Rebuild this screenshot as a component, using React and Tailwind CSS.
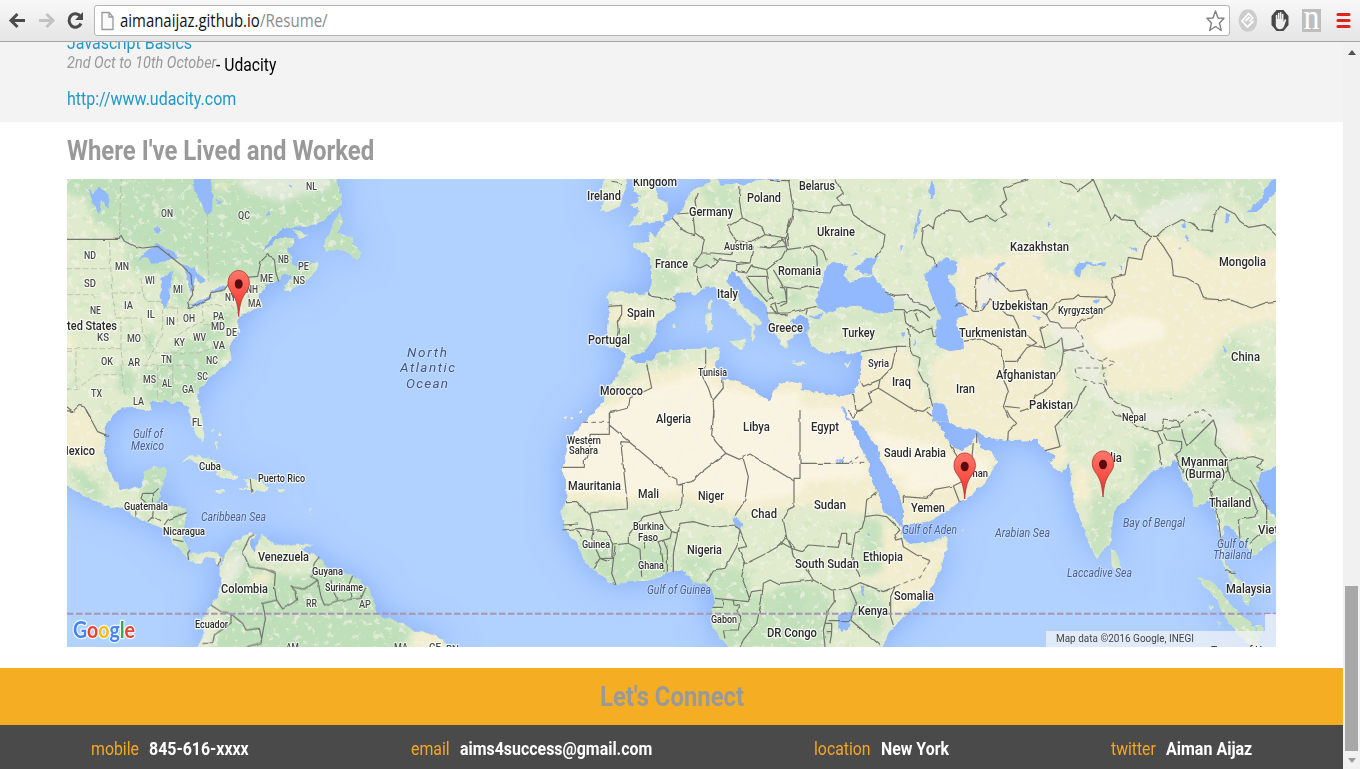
import React, { useLayoutEffect, useRef } from "react";

/* Text condensed horizontally to the width of its box. */
function Fit({ className = "", children }) {
  const box = useRef(null);
  const text = useRef(null);
  useLayoutEffect(() => {
    const fit = () => {
      const natural = text.current.offsetWidth;
      if (natural) text.current.style.transform = `scaleX(${box.current.clientWidth / natural})`;
    };
    fit();
    document.fonts?.ready.then(fit);
  }, []);
  return (
    <span ref={box} className={`block shrink-0 whitespace-nowrap ${className}`}>
      <span ref={text} className="inline-block origin-left">{children}</span>
    </span>
  );
}

/* The map is drawn in sheets; each sheet has its own origin and a 3:1 scale. */
const SHEETS = {
  A: "translate(66 178) scale(.33333)",
  D: "translate(66 410) scale(.33333)",
  E: "translate(540 178) scale(.33333)",
  F: "translate(780 178) scale(.33333)",
  G: "translate(1020 178) scale(.33333)",
  H: "translate(540 410) scale(.33333)",
  I: "translate(780 410) scale(.33333)",
  J: "translate(1020 410) scale(.33333)",
};

const LAND = [
  ["A", "M-30-30H800L815 20 828 50 828 80 800 100 775 128 740 140 720 147 690 145 650 152 625 172 600 205 580 232 600 212 622 192 650 180 680 180 685 195 662 215 675 235 678 255 700 272 725 268 755 248 757 262 745 285 715 310 680 335 660 340 655 325 680 300 672 288 650 290 637 310 600 322 585 340 580 362 590 385 565 396 540 405 520 415 515 440 520 460 505 480 490 505 497 545 475 565 440 590 405 625 393 650 400 685 410 725H372L370 690 350 672 320 675 300 665 280 672 250 675 257 692 235 700 215 690 180 688 150 700 130 725H-30Z"],
  ["A", "M825 103L805 128 790 170 775 200 780 222 815 213 840 222 862 230 875 253 882 220 860 195 860 180 832 172 815 165 828 130Z"],
  ["A", "M680 155L700 158 725 172 700 180Z"],
  ["D", "M-30-10H165L125 15 118 60 115 110 120 155 140 200 165 238 200 235 225 230 238 185 260 172 300 175 295 205 285 235 278 265 272 290 310 288 345 290 362 310 355 345 350 385 370 428 400 435 430 422 455 430 466 445 458 468 440 445 420 440 405 463 365 450 345 420 320 405 315 385 290 355 250 340 200 315 170 288 135 295 90 275 60 260 0 225-30 210Z"],
  ["D", "M370-10L375 30 390 65 405 93 415 75 410 40 398-10Z"],
  ["D", "M345 158L365 140 400 136 440 152 470 175 515 200 500 207 465 205 450 187 410 168 370 150Z"],
  ["D", "M447 240L470 238 478 245 460 252Z"],
  ["D", "M535 207H575L612 235 600 242 570 240 560 250 552 240 515 240 548 233Z"],
  ["D", "M635 238H658L655 247H637ZM448 95L456 100 453 120ZM458 65L468 70 462 80ZM432 62L446 60 440 66ZM733 296L738 300 734 304ZM737 312L740 318 735 318Z"],
  ["D", "M460 470L475 440 490 410 520 385 550 365 572 372 556 400 565 425 575 400 590 370 600 385 620 400 660 408 715 402 740 405 705 418 740 430 765 450 795 490 860 495 905 530 925 580 935 612 960 625 1010 640 1050 665 1100 672 1130 690 1150 725H400L400 690 415 670 405 645 430 590 455 560 467 520Z"],
  ["E", "M195-10H255L262 20 245 60 240 85 200 103 180 95 200 60 185 35Z"],
  ["E", "M275-10L285 20 280 40 300 50 292 72 272 82 300 95 285 115 262 150 300 138 375 130 368 115 385 100 382 75 355 60 350 40 330-10Z"],
  ["E", "M505-20L512 10 475 30 445 50 430 95 395 120 360 155 345 180 325 162 328 192 280 195 278 210 320 225 335 265 330 345 300 348 215 340 198 358 208 390 205 450 198 505 235 508 262 540 310 520 345 480 350 440 408 385 400 355 430 340 465 350 500 325 530 330 560 375 600 410 635 450 632 490 645 475 640 440 668 437 655 420 610 385 590 350 562 310 575 280 600 300 640 350 680 380 685 420 705 460 725 500 740 515 735 490 755 485 770 460 745 430 780 405V20L690 5 650 5 620 22 590 15 540 25 530-20Z"],
  ["E", "M570 490L615 485 608 515 580 502ZM495 410L515 403 517 455 500 462ZM505 370L515 363 512 395 503 392ZM395 445L405 438 409 450ZM756 552L782 555V562Z"],
  ["E", "M150 725L190 670 195 640 230 600 245 565 258 535 290 555 320 555 360 522 430 513 480 512 535 508 545 522 525 560 548 605 600 610 650 645 690 672 697 635 740 610 785 618V725Z"],
  ["F", "M0-10H790V730H-3V615L60 636 120 645 150 650 190 655 222 645 240 600 245 518 215 530 180 518 130 528 95 505 82 470 85 425 60 408 30 428 42 450 60 465 20 480 25 510 0 500Z"],
  ["F", "M188 560L215 550 200 570ZM35 550L82 556 60 563Z"],
  ["G", "M-5-10H800V730H-5Z"],
  ["H", "M180-10L130 40 85 90 80 130 65 180 78 215 80 270 62 310 75 345 85 375 110 395 130 450 155 475 200 510 228 525 270 513 320 513 360 500 390 485 430 480 460 520 495 520 520 545 525 575 515 610 512 640 540 680 575 720H785V-10Z"],
  ["H", "M68 22L78 18 74 28ZM90 25H98V32ZM116 8L128-2 124 12Z"],
  ["I", "M-5-10H182L215 50 240 110 265 150 270 200 300 265 310 305 345 330 362 350 370 385 390 402 450 395 500 378 505 400 480 480 450 540 410 590 350 640 325 670 303 725H-5Z"],
  ["I", "M222-10L240 40 290 110 315 180 355 240 370 300 368 345 440 335 510 300 525 280 560 265 610 225 652 155 635 130 600 112 590 75 575 100 545 125 510 105 495 75 470 35 452-10Z"],
  ["I", "M488-10L510 40 545 55 580 55 610 80 680 94 785 88V-10ZM543 362L557 360 550 366Z"],
  ["J", "M-5-10V90L50 90 80 125 108 140 88 155 110 180 125 188 150 158 155 230 165 290 190 350 215 420 230 447 245 425 270 400 280 320 290 290 320 270 365 220 400 180 455 165 462 150 475 165 490 210 515 240 520 290 555 280 577 265 590 330 605 400 600 450 620 480 630 510 670 570 685 588 690 565 665 520 640 490 615 460 612 430 605 390 615 345 635 350 660 390 675 400 700 440 735 410 790 370V345L745 300 720 260 712 220 722 188 790 160V-10Z"],
  ["J", "M273 418L290 430 305 470 290 490 275 470ZM535 500L580 518 640 590 690 640 718 680 715 725 670 690 620 630 590 570 545 520ZM700 650L725 645 730 675ZM590 630L600 640 598 648ZM568 585L578 590 574 600Z"],
];

const FOREST = [
  ["A", "M-20-20H840V110L720 150 610 210 580 260 560 295 500 300 440 310 400 280 340 250 300 215 200 205 150 180 140 150 90 140 60 60-20 40Z"],
  ["A", "M170 215L240 230 300 250 350 290 370 390 330 380 310 290 200 280ZM560 290L600 225 680 180 750 280 650 340 600 330ZM775 100H890V270H775Z"],
  ["A", "M330 500L420 470 490 510 400 640 300 690 290 560ZM150 560L200 580 210 650 160 640ZM230 570L320 560 310 670 240 680ZM230 470L270 460 265 520 240 515ZM400 450L470 400 510 400 480 470 400 510Z"],
  ["D", "M230 165H310V300H225ZM300 300L365 290 355 390 320 350ZM0 170L60 190 130 270 60 260ZM320 390L370 400 380 460Z"],
  ["D", "M440 540L480 570 520 440 550 450 590 470 628 490 720 500 760 450 960 520 960 620 1040 660 1000 725H430L480 620ZM495 410L530 390 530 450 490 450Z"],
  ["E", "M475 20L590 15 600 90 540 110 500 80ZM345 200L390 200 380 270 440 300 400 345 335 345ZM225 440L330 430 330 520 270 530ZM620 300L690 330 700 370 660 360ZM700 330L780 340V370L710 360ZM320 530L400 515 420 560 350 575ZM225 590L280 570 270 620ZM450 240L510 225 530 250 480 280Z"],
  ["F", "M-5 190L60 230 130 240 120 310 0 330ZM-5 340L100 340 80 390 0 400ZM85 430L180 400 340 400 400 420 330 440 200 430 140 460 110 510ZM330 350L460 390 450 420 370 390ZM560-10L660-10 640 80 580 60ZM410 430L470 470 440 500ZM390 520L450 560 430 640Z"],
  ["G", "M240-10H620L590 90 480 110 400 160 420 80 360 100 330 40 260 30ZM620-10H790L730 60 690 110 640 60ZM580 460L680 490 700 570 780 610V730H520L620 640 590 570Z"],
  ["H", "M110 370L220 400 310 400 370 410 390 360 400 500 230 530 140 470ZM420 520L520 470 620 480 640 560 790 520V730H500ZM395 400L430 480 500 520 520 440 430 440Z"],
  ["I", "M-5 520L140 530 160 640 130 720H-5ZM245 320L310 340 310 480 240 500ZM210 540L280 540 320 600 300 680 210 640Z"],
  ["J", "M210 270L270 250 320 240 290 290 270 400 230 450 190 360 215 340ZM430 60L560 30 600 110 600 280 520 290 490 190ZM590 130L720 160 720 290 790 350V420L700 450 640 350 590 330ZM520 490H740V730H620ZM600 430L700 590H660ZM260 410H310V500ZM340 90L410 110 390 190 340 230Z"],
];
const DENSITY = { A: 0.95, D: 0.95, E: 0.6, F: 0.4, G: 0.5, H: 0.8, I: 0.75, J: 0.7 };

const DESERT = [
  ["A", "M-10 470L30 480 30 520-10 530ZM450 10L500 20 460 40Z"],
  ["D", "M-10-10L60 0 110 80 90 160 40 170-10 120ZM550 500L610 480 620 520 560 530ZM1040 665L1140 660V730H1040Z"],
  ["E", "M200 410L240 380 330 390 350 440 230 440ZM130 730L250 630 330 580 450 560 540 540 560 600H790V730Z"],
  ["F", "M530 240L790 220V720H480L450 560 500 520 530 400ZM240 540L330 510 390 520 430 640 450 730H200ZM-10 610L160 650 240 600V730H-10Z"],
  ["G", "M-10 260L130 290 270 310 330 240 400 170 470 170 560 240 790 210V420L640 450 560 560 480 640 270 640 250 560 160 480-10 440ZM-10 600L130 560 150 650-10 730Z"],
  ["H", "M-10-10H790V290L600 310 420 270 260 280 130 270 50 290Z"],
  ["I", "M-10-10H670L650 260 370 360 300 300 240 310-10 270ZM310 330L420 420 520 370 450 560 340 620 330 530 220 520 310 490ZM490-10H790V90H610Z"],
  ["J", "M-10-10H140L100 80 150 130 100 200-10 100ZM160 160L210 180 210 270 160 280ZM620 50L700 60 680 130 620 100Z"],
];

const PALE = [
  ["A", "M500-10H790L790 30 700 50 650 70 540 40ZM300 40L330 60 310 70Z"],
  ["F", "M590 300L640 290 680 340 600 390ZM310 335L440 370 460 400 350 370Z"],
  ["G", "M60 410L180 450 230 520 240 620 300 680 260 690 200 610 160 560 120 500ZM360 110L480 50 590 40 580 70 470 130 390 160Z"],
  ["E", "M465 280L600 230 560 260 490 290Z"],
  ["J", "M260-10H680L600 50 520 10 400 50ZM575 60L640 20 700 130 620 120Z"],
  ["D", "M500 420L540 430 530 480 440 600 430 711 400 700 460 560Z"],
];

const SAND = [
  ["G", "M210 470L330 410 430 430 430 480 260 520Z"],
  ["H", "M60-10H790V250L600 280 420 240 260 260 70 240Z"],
  ["I", "M370 200L520 150 640 140 600 200 450 240 380 250ZM-5-5H230L260 200-5 220ZM270 60L480 110 520 150 440 180 340 200Z"],
  ["E", "M260 660L480 580 530 630 640 650 780 640V730H160Z"],
];

const WATER = [
  ["A", "M382-10L385 40 405 75 420 110 438 100 440 60 433-10ZM213 250L240 220 275 193 310 215 337 240 300 248 260 257 240 238ZM287 300L302 290 322 278 312 320 308 375 293 392 283 350ZM350 258L385 270 400 290 420 305 405 318 387 300 382 330 376 340 360 290ZM365 385L390 372 432 350 435 362 400 383ZM432 340L475 322 480 332 440 346ZM66 25L76 60 100 110 105 60 125 95 128 50 100 25 80 50ZM262 150L275 142 282 158 270 172ZM610 95L616 110 600 115ZM450 65L466 70 455 76ZM665 15L680 22 672 30Z"],
  ["D", "M556 385L568 400 566 425 555 415Z"],
  ["F", "M105 370L120 325 140 270 160 252 205 262 190 295 210 315 245 295 280 295 300 320 340 360 343 395 310 410 270 400 235 385 190 385 140 405 115 390ZM222 272L265 240 300 237 275 265 277 290 245 288ZM432 290L480 250 500 240 532 252 530 285 500 292 507 310 525 330 530 370 555 390 565 410 530 420 530 445 550 480 552 512 510 520 470 505 465 460 470 430 485 420 465 380 445 330ZM82 415L130 406 120 425ZM455 690L465 678 492 675 508 730H460ZM185 683L195 690 210 730H200ZM358 465L372 462 370 478ZM400 480L410 495 405 507ZM640 275L665 250 678 255 655 275ZM640 290L655 285 645 318ZM624 285L632 283 630 315ZM605 385L625 370 612 393Z"],
  ["F", "M455 5L468 40 450 65 448 35ZM418 90L424 95 412 160 398 190 408 140ZM362 200L370 205 360 225ZM208 230L235 224 232 230Z"],
  ["G", "M165 290L163 275 175 258 200 250 225 258 258 252 255 262 200 262 185 275 180 298ZM675 103L700 85 725 60 735 35 768-5V40L740 75 710 102ZM210 370L240 363 235 378ZM484 140L496 134 498 150 486 152ZM618 105L627 108 622 135 616 130ZM325 206L352 214 348 222ZM605 505L625 518 615 524ZM35 408L65 415 55 425ZM297 262L307 265 305 277ZM478 205L485 206 480 216ZM450 660L460 660 452 668ZM80 135L92 138 86 148ZM495 172L506 178 500 188Z"],
  ["H", "M577 325L590 322 610 345 600 358 585 345ZM342 450L352 460 345 475Z"],
  ["I", "M175 640L212 635 210 650 180 665ZM173 630L180 610 218 605 208 655 180 665ZM165 158L195 138 190 155ZM242 520L250 530 255 560 245 555ZM262 365L270 370 266 378Z"],
  ["J", "M720 190L768 170 790 160V345L745 300 722 258 712 220Z"],
];

const BORDERS = [
  ["A", "M0 184H160L165 172 175 190 205 205 230 210 275 205 300 225 345 260 375 290 380 350 365 375 370 392 430 362 435 345 475 335 490 315 520 300 575 295 585 250 605 230 625 245 630 285 638 310M0 685L20 700 40 682 55 687 75 720"],
  ["D", "M0 2L25 4M60 0L95 65 125 77M210 320L208 290 225 285M230 250H262V285M230 250L225 265 240 278M262 250L278 235M262 290L260 320 245 335M260 320L285 335M295 345L305 330 330 320 362 308M318 388L352 395M372 420L365 430 368 450M553 210L558 248M455 468L465 445"],
  ["D", "M565 373L550 382 530 425 550 470 600 478 628 490 625 530 632 570 590 580 598 625 585 698 540 711M632 570L650 597 695 570 690 545 675 530 700 535 715 540 755 510 735 500 745 460 760 440M755 510L765 560 775 585 815 572 885 565 900 530M795 510L800 540 815 570M860 497L850 520 855 565M435 585L465 605 495 608 495 640 445 675 440 700 410 700M495 612L530 640 540 660 580 655 588 690"],
  ["E", "M215 10L230 12 245 20M475 45L465 70 470 95 460 120 465 165 493 185 485 225M395 118L410 135 425 155 445 165 465 170M410 108L450 105M600 25L598 70 607 120M607 120L565 145 570 160 590 190M607 120L640 135 665 145 675 170 735 180 752 120M590 190L640 190 675 170M485 225L460 260M485 225L520 225 570 230 590 190M460 262L480 270 500 260 515 270 535 250 520 240M535 245L580 250 630 255 640 205M470 265L470 300 485 330M630 255L590 260 590 280 620 285 635 260M635 265L680 275 725 240 740 210M650 205L690 210 735 180 740 210M620 295L680 295 685 340 700 360 680 370 620 300M680 275L685 300M700 275L735 335 740 370 705 375 715 410M705 375L690 380 710 410 740 410"],
  ["E", "M325 345L335 355 370 360 407 370M205 385L245 382 245 410 232 430 235 460 225 505M320 557L325 580 335 630 270 660 265 690 208 705 210 720M497 515V560L485 590 505 630 520 675 522 720M548 605L550 630 515 672"],
  ["E", "M690 7L750 8"],
  ["F", "M25 0L40 95M40 92L100 102 150 105 160 85 185 80 170 60 190 45 165 5M185 82L210 80 220 110 260 140 315 170 310 205 285 238M40 95L35 130 20 160 25 205M0 178L15 195 20 215 90 205 100 202 130 220 140 250M90 205L110 235 112 265M0 325L60 333 90 325 118 330M20 330L20 375 0 385M20 405L75 393 110 385M82 393L78 410M-40 405L20 405M-40 210L15 205"],
  ["F", "M315 342L345 352 380 350 400 372 440 385 450 398 465 388M342 395L372 395 380 405 410 395 425 400M372 400L378 435 390 445 420 465 435 455 455 447 460 475 468 475M405 405L415 430M385 450L388 475 390 505M425 400L450 420M245 520L350 505 390 505M350 505L335 570 300 605 250 625 242 610M300 605L295 630 400 695 430 700 450 685M390 508L400 530 420 540 415 580 430 610 445 620 450 655 458 685M295 630L265 645 275 672 240 697 228 697 220 645"],
  ["F", "M468 265L460 240 440 230 425 195 430 150 445 140 460 150 465 125 500 95 540 100 565 130 620 115 645 130 680 110 660 85 680 65 670 30 710 15 745 5M552 490L600 480 665 515 672 560 670 600 685 640 670 685 685 720M525 385L545 375 580 400 605 400 630 362 680 410 700 415 720 455 770 495 740 510 710 550 675 550M587 395V300L632 285 690 340 738 335M675 685L720 690"],
  ["G", "M120 10L130 15 155 20 175 38 220 5 275 128 285 110 305 125 340 128 360 155 380 165 390 175 410 175 430 155 485 125 515 135 540 155 575 158 585 110 600 85 645 108 660 130 685 148 735 140 768 172M410 178L430 205 455 245 460 293 500 300 535 320 552 362 635 367 695 390 740 373 768 370M395 178L375 200 365 245 325 238 315 290 275 300 285 350 275 380M275 375L260 358 180 355 175 350 160 362 125 365 80 410M18 335L35 375 80 412M80 412L90 430 115 435 125 450 165 450 170 440 185 425 215 420 220 410 275 380M85 440L60 450 75 510 110 495 125 480 130 520M20 500L75 510M130 520L190 505M130 520L125 560 95 620 75 640 45 655 30 690 0 700M200 625L180 650 170 680 140 720M250 620L270 660 290 675 330 690 345 720"],
  ["H", "M208 5L208 45 385 195 410 208 412 225 455 215 480 190 558 130 527 95 515 75 522 0M208 5L230 0M208 45V73H150V130L133 150V172H65M242 95L262 280 262 297 155 305 150 315M242 95L270 97M78 275H110L150 315 160 360M70 345L115 342M70 360L120 355 160 362 200 365 218 402M110 360L125 380M412 225L428 225 425 280 415 300 360 308 310 320 265 375 265 400M265 400L218 405 215 445 178 445M225 410L215 490 228 525M160 475L180 445 205 455M160 362L155 385 165 410 180 445M265 400L300 418 305 500M310 415L315 392 355 395 390 385 395 365 375 340 360 308M355 395L365 425 372 485M370 390L382 420 382 485M415 360L400 430 400 485M395 365L415 370 420 340 460 335 520 352 585 345M585 345L600 360 590 410 555 475 520 480 500 515M600 360L620 410 595 415 615 460 605 500 630 570M558 130L598 148 630 132 762 213M608 140L625 200 615 270 585 320M730 400L680 430 615 462M745 390L765 415M525 565L625 575 635 545 668 540 665 570 650 640 610 690 600 711M548 570V592H520M600 590L590 600 602 620 595 660 550 660 555 685M668 540L670 520 690 510 720 525M580 572L582 585 600 588"],
  ["I", "M60 0V205H42V290L25 298 10 330 20 380 35 415M60 160H205M20 380L-5 410M0 395L35 415 40 440 75 470 100 510M35 415L65 425 85 405 175 412 185 370 200 370 200 400 215 400M215 440L240 500M290 245L260 270 255 320 245 360 225 370 215 440M255 320L290 315 320 320 360 360 345 375 350 390 365 385 370 410 410 435 450 452M0 520L100 510 155 540 205 535 240 518 310 545 345 530 332 560V620L340 645M210 535L228 575 212 630 300 705M160 540L163 575 145 600 130 660 135 711M145 632H210M135 640L155 640 155 665 140 665M155 665L150 700M205 0L220 25 230 0M370 260L440 265 465 238 520 228 545 215 555 180 575 150 580 100M520 228L538 275M510 105L535 145M228 5L250 0M680 0L690 20 710 40 685 65 683 92M590 70V100M370 260L370 280M440 5L455 18"],
  ["J", "M75 122L120 110 105 50 150 0M275 0L285 15 330 30 350 50 410 65 425 60 430 30 475 35 480 50 430 55M412 65L428 100 415 110 425 165M430 70L440 90 485 95 485 115 465 130 490 190M485 60L500 110 550 60 580 30 590 60 585 100 620 145M620 145L625 180 580 220 570 240 590 300 605 400M620 150L700 140 730 150 710 170 730 180M620 170L635 210 690 240 710 300 705 320 655 330 660 385M690 210L740 290 740 340 725 370 690 400M615 480L635 490 650 490"],
];

const STATES = [
  "M0 272H130M0 350H80L90 365M138 345H225M138 345L150 420H225M80 437H155M0 512H165L170 560 220 565M0 520H25M30 520V630M165 512V430M225 420L230 465 265 510 240 560M225 300L230 345 245 370H290M290 390V470L265 510M290 390H335M335 390V445M335 470L410 430 410 380M422 380H490M425 0V240L430 310M165 0L160 172M130 190L138 345M265 525H400L440 510 500 512M230 562H370M275 562V665M320 562V665M370 562L410 610M410 440L460 440M495 380L515 410M0 635H30L90 590 165 590M165 560L175 650M545 300L550 385M575 320L590 330",
];

// [text, left, right, baseline]
const COUNTRIES = [
  ["Kingdom", 633, 677, 186], ["Ireland", 587, 621, 200], ["Germany", 689, 733, 216.5], ["Poland", 747, 781, 202],
  ["France", 655, 688, 268], ["Italy", 717, 738, 298.5], ["Spain", 627, 655, 317], ["Portugal", 588, 630, 344],
  ["Morocco", 600, 643, 395.5], ["Romania", 778, 821, 275], ["Greece", 768, 803, 332.5], ["Belarus", 799, 835, 190.5],
  ["Ukraine", 817, 855, 236], ["Turkey", 842, 875, 337], ["Iraq", 892, 911, 386], ["Iran", 956, 975, 393],
  ["Kazakhstan", 1010, 1069, 251.5], ["Uzbekistan", 992, 1048, 310], ["Turkmenistan", 959, 1027, 337],
  ["Afghanistan", 996, 1056, 379], ["Pakistan", 1029, 1073, 409.5], ["Mongolia", 1219, 1266, 266], ["China", 1231, 1260, 361.5],
  ["Algeria", 656, 691, 423.5], ["Libya", 743, 770, 431.5], ["Egypt", 811, 839, 431.5], ["Mauritania", 568, 621, 490],
  ["Mali", 638, 659, 498], ["Niger", 698, 724, 500.5], ["Chad", 751, 777, 518], ["Nigeria", 687, 722, 554.5],
  ["DR Congo", 767, 817, 637.5], ["Sudan", 814, 846, 509], ["South Sudan", 795, 859, 568.5], ["Ethiopia", 863, 903, 561.5],
  ["Somalia", 894, 934, 600], ["Kenya", 858, 888, 615.5], ["Yemen", 911, 945, 512.5], ["Saudi Arabia", 884, 946, 457],
  ["India", 1097, 1122, 462], ["Myanmar", 1181, 1228, 466.5], ["(Burma)", 1185, 1225, 478.5], ["Thailand", 1209, 1251, 507.5],
  ["Vietnam", 1258, 1301, 534.5], ["Malaysia", 1226, 1271, 593.5], ["Mexico", 59, 95, 455], ["Venezuela", 258, 309, 561.5],
  ["Colombia", 221, 268, 593], ["United States", 51, 117, 330],
];
const SMALL = [
  ["Austria", 724, 753, 250.5], ["Tunisia", 698, 727, 376], ["Syria", 868, 889, 367], ["Kyrgyzstan", 1058, 1103, 314],
  ["Nepal", 1122, 1146, 421], ["Western", 567, 601, 444], ["Sahara", 569, 598, 454.5], ["Burkina", 633, 664, 530.5],
  ["Faso", 638, 658, 541], ["Guinea", 582, 610, 548], ["Ghana", 638, 664, 569], ["Gabon", 711, 737, 623],
  ["Oman", 963, 988, 477.5], ["Cuba", 199, 221, 470.5], ["Puerto Rico", 258, 305, 482.5], ["Guatemala", 124, 168, 510.5],
  ["Nicaragua", 163, 205, 535.5], ["Guyana", 312, 343, 575], ["Suriname", 325, 363, 591.5], ["Ecuador", 195, 228, 628],
];
const PROVINCES = [
  ["ON", 161, 173, 217], ["QC", 238, 250, 219], ["NL", 306, 317, 190], ["ND", 84, 96, 259], ["MN", 115, 129, 270],
  ["WI", 145, 155, 284], ["MI", 173, 183, 293], ["NB", 278, 289, 263], ["PE", 298, 309, 270.5], ["NS", 293, 305, 284.5],
  ["ME", 260, 273, 282], ["NH", 246, 258, 293], ["NY", 225, 236, 301.5], ["MA", 248, 261, 307], ["SD", 84, 96, 287],
  ["NE", 90, 101, 314], ["IA", 124, 133, 309], ["IL", 147, 155, 318.5], ["IN", 166, 175, 325.5], ["OH", 183, 195, 322],
  ["PA", 213, 224, 320], ["MD", 211, 225, 330.5], ["DE", 226, 237, 336], ["KS", 97, 109, 341], ["MO", 127, 141, 342],
  ["WV", 193, 206, 341], ["KY", 174, 185, 346.5], ["VA", 213, 225, 349.5], ["OK", 101, 113, 365.5], ["AR", 128, 140, 366.5],
  ["TN", 161, 172, 363], ["NC", 206, 218, 364.5], ["MS", 143, 156, 383], ["AL", 162, 172, 387.5], ["GA", 182, 194, 393.5],
  ["SC", 197, 208, 380.5], ["TX", 91, 102, 397], ["LA", 133, 144, 405.5], ["FL", 192, 202, 426], ["RR", 306, 317, 607],
  ["AP", 359, 371, 608.5], ["AM", 286, 299, 651.5], ["MA", 394, 408, 651.5], ["CE", 429, 441, 651.5], ["RN", 446, 459, 653.5],
];
const SEAS = [
  ["Gulf of Guinea", 647, 711, 594], ["Gulf of Aden", 902, 957, 534.5], ["Arabian Sea", 995, 1050, 537],
  ["Laccadive Sea", 1067, 1132, 577], ["Bay of Bengal", 1123, 1185, 527.5], ["Gulf of", 1217, 1248, 548],
  ["Thailand", 1213, 1252, 559.5], ["Gulf of", 133, 163, 438.5], ["Mexico", 131, 164, 450.5], ["Caribbean Sea", 201, 266, 521.5],
];
const OCEAN = [["North", 407, 447, 357.5], ["Atlantic", 400, 455, 372.5], ["Ocean", 406, 448, 388]];

function Shapes({ items, density, ...rest }) {
  return (
    <g {...rest}>
      {items.map(([sheet, d], i) => <path key={i} transform={SHEETS[sheet]} d={d} opacity={density ? density[sheet] : undefined} />)}
    </g>
  );
}

function Labels({ items, spaced, ...rest }) {
  return (
    <g paintOrder="stroke" strokeLinejoin="round" {...rest}>
      {items.map(([label, x1, x2, y], i) => (
        <text key={i} x={x1} y={y - 0.5} textLength={x2 - x1} lengthAdjust={spaced ? "spacing" : "spacingAndGlyphs"}>{label}</text>
      ))}
    </g>
  );
}

function Pin({ x, y }) {
  return (
    <g transform={`translate(${x} ${y})`}>
      <path d="M0 0C-1-14-3.500-19-7.500-24.500-9.500-27.500-10.700-30-10.700-33.500-10.700-40.500-6-46 0-46S10.700-40.500 10.700-33.500C10.700-30 9.500-27.500 7.500-24.500 3.500-19 1-14 0 0Z" fill="url(#pin)" stroke="#b0332e" strokeWidth=".8" />
      <ellipse cy="-32.500" rx="4" ry="4.800" fill="#5b0b0b" />
    </g>
  );
}

function WorldMap() {
  return (
    <svg className="block h-full w-full font-[Roboto,sans-serif]" viewBox="67 179 1209 468" preserveAspectRatio="none">
      <defs>
        <clipPath id="land">{LAND.map(([s, d], i) => <path key={i} transform={SHEETS[s]} d={d} />)}</clipPath>
        <filter id="glow" filterUnits="userSpaceOnUse" x="20" y="130" width="1310" height="570"><feGaussianBlur stdDeviation="17" /></filter>
        <filter id="soft" filterUnits="userSpaceOnUse" x="20" y="130" width="1310" height="570"><feGaussianBlur stdDeviation="3" /></filter>
        <filter id="rough" filterUnits="userSpaceOnUse" x="40" y="150" width="1270" height="530">
          <feTurbulence type="fractalNoise" baseFrequency=".16" numOctaves="2" seed="4" result="n" />
          <feDisplacementMap in="SourceGraphic" in2="n" scale="5" xChannelSelector="R" yChannelSelector="G" />
        </filter>
        <filter id="wiggle" filterUnits="userSpaceOnUse" x="40" y="150" width="1270" height="530">
          <feTurbulence type="fractalNoise" baseFrequency=".12" numOctaves="1" seed="9" result="n" />
          <feDisplacementMap in="SourceGraphic" in2="n" scale="3" xChannelSelector="R" yChannelSelector="G" />
        </filter>
        <filter id="woods" filterUnits="userSpaceOnUse" x="40" y="150" width="1270" height="530" colorInterpolationFilters="sRGB">
          <feTurbulence type="fractalNoise" baseFrequency=".07 .09" numOctaves="4" seed="12" />
          <feColorMatrix values="0 0 0 0 .75  0 0 0 0 .88  0 0 0 0 .72  9 0 0 0 -5.400" />
        </filter>
        <filter id="specks" filterUnits="userSpaceOnUse" x="40" y="150" width="1270" height="530" colorInterpolationFilters="sRGB">
          <feTurbulence type="fractalNoise" baseFrequency=".15" numOctaves="4" seed="31" />
          <feColorMatrix values="0 0 0 0 .96  0 0 0 0 .95  0 0 0 0 .91  0 10 0 0 -6.100" />
        </filter>
        <linearGradient id="pin" x2="0" y2="1"><stop stopColor="#ff776b" /><stop offset=".65" stopColor="#f4483f" /><stop offset="1" stopColor="#c8322e" /></linearGradient>
      </defs>
      <rect x="67" y="179" width="1209" height="468" fill="#b1d1ff" />
      <Shapes items={LAND} fill="#82aafa" filter="url(#glow)" />
      <g filter="url(#rough)">
        <Shapes items={LAND} fill="#e0ebcd" />
        <g clipPath="url(#land)">
          <Shapes items={FOREST} density={DENSITY} fill="#bddeb8" filter="url(#soft)" />
          <rect x="67" y="179" width="1209" height="468" filter="url(#woods)" opacity=".35" />
          <Shapes items={DESERT} fill="#f5edcf" opacity=".93" filter="url(#soft)" />
          <Shapes items={SAND} fill="#fbf6e5" opacity=".8" filter="url(#soft)" />
          <Shapes items={PALE} fill="#eeeee6" opacity=".7" filter="url(#soft)" />
          <rect x="67" y="179" width="1209" height="468" filter="url(#specks)" opacity=".6" />
        </g>
        <Shapes items={WATER} fill="#92b8fd" />
      </g>
      <g filter="url(#wiggle)">
        <Shapes items={BORDERS} fill="none" stroke="#74756f" strokeWidth="3.600" strokeLinejoin="round" />
        <g transform={SHEETS.A} fill="none" stroke="#b5b9a8" strokeWidth="2.500" strokeDasharray="18 7">{STATES.map((d, i) => <path key={i} d={d} />)}</g>
        <g fill="none" stroke="#87877e" strokeWidth="3.500" strokeDasharray="14 10">
          <path transform={SHEETS.G} d="M170 450L185 480 190 505 215 540 245 550 260 620 210 610 170 600 165 570 190 570 260 570 285 550 260 540 245 550M130 515L190 520M500 715L550 695 580 720" />
          <path transform={SHEETS.H} d="M130 37H208" />
          <path transform={SHEETS.I} d="M205 160L235 140M215 160H262M450 452L420 500 345 530" />
          <path transform={SHEETS.J} d="M480 40L500 25M545 40L560 25" />
        </g>
      </g>
      <path d="M67 613.800H1276" stroke="#a995b3" strokeWidth="1.900" strokeDasharray="6.500 2.500" />
      <Labels items={PROVINCES} fontSize="10.800" fontWeight="500" fill="#484a46" stroke="#fff" strokeOpacity=".8" strokeWidth="2.200" />
      <Labels items={SMALL} fontSize="11.300" fontWeight="500" fill="#2c2d29" stroke="#fff" strokeOpacity=".85" strokeWidth="2.400" />
      <Labels items={COUNTRIES} fontSize="13.500" fontWeight="500" fill="#2b2c28" stroke="#fff" strokeOpacity=".85" strokeWidth="2.600" />
      <Labels items={SEAS} fontSize="12" fontStyle="italic" fill="#4a6192" stroke="#d9e7ff" strokeOpacity=".5" strokeWidth="2" />
      <Labels items={OCEAN} spaced fontSize="13.500" fontStyle="italic" fill="#43587f" stroke="#d9e7ff" strokeOpacity=".5" strokeWidth="2" />
      <Pin x={238.7} y={316.500} />
      <Pin x={964.7} y={499} />
      <Pin x={1103} y={497} />
      <path d="M1265 614H1276V647H1046V631H1265Z" fill="#f5f5f5" opacity=".7" />
      <text x="1056" y="642" fontSize="11.300" fill="#444" textLength="138" lengthAdjust="spacingAndGlyphs">Map data ©2016 Google, INEGI</text>
      <text x="1211" y="653.800" fontSize="11.300" fill="#222" textLength="62" lengthAdjust="spacingAndGlyphs">Terms of Use</text>
      <text x="73" y="638" fontSize="23" fontWeight="700" paintOrder="stroke" stroke="#fff" strokeOpacity=".85" strokeWidth="2.500" textLength="62" lengthAdjust="spacingAndGlyphs" className="font-[Lato,sans-serif]">
        <tspan fill="#4285f4">G</tspan><tspan fill="#ea4335">o</tspan><tspan fill="#fbbc05">o</tspan><tspan fill="#4285f4">g</tspan><tspan fill="#34a853">l</tspan><tspan fill="#ea4335">e</tspan>
      </text>
    </svg>
  );
}

function Toolbar() {
  return (
    <header className="flex h-[42px] shrink-0 items-start border-b border-[#a6a6a6] bg-linear-to-b from-[#f8f8f8] to-[#e5e5e5] pt-[5px]">
      <svg className="h-[31px] w-[94px] shrink-0" viewBox="0 5 94 31" fill="none">
        <path d="M25 20.500H12M17.500 14L11 20.500 17.500 27" stroke="#4b4b4b" strokeWidth="3" />
        <path d="M39 20.500H52M46.500 14L53 20.500 46.500 27" stroke="#c2c2c2" strokeWidth="3" />
        <path d="M80.500 16.500A6.300 6.800 0 1 0 81 23.500" stroke="#4b4b4b" strokeWidth="3" />
        <path d="M83 12V20H75Z" fill="#4b4b4b" />
      </svg>
      <div className="flex h-[31px] w-[1136px] items-center rounded-[3px] border border-[#b5b5b5] bg-white pr-1 pl-[6px]">
        <svg className="h-5 w-[13px] shrink-0" viewBox="0 0 13 20"><path d="M1 1.500H8L12 6V18.500H1ZM8 1.500V6H12" fill="#fafafa" stroke="#999" strokeWidth="1.300" /></svg>
        <div className="-mt-[2px] ml-[6px] flex font-['Open_Sans',sans-serif] text-[17.5px] leading-[28px]">
          <Fit className="w-[140px] text-[#111]">aimanaijaz.github.io</Fit>
          <Fit className="w-[68px] text-[#8b8b8b]">/Resume/</Fit>
        </div>
        <svg className="ml-auto h-[22px] w-[19px] shrink-0" viewBox="0 0 19 22"><path d="M9.500 1L12 8 18 8.300 13.500 13 15.300 20.500 9.500 16.500 3.700 20.500 5.500 13 1 8.300 7 8Z" fill="#fff" stroke="#808080" strokeWidth="1.400" strokeLinejoin="round" /></svg>
      </div>
      <svg className="h-[31px] w-[130px] shrink-0" viewBox="1230 5 130 31">
        <ellipse cx="1248" cy="20.500" rx="9.300" ry="11.300" fill="#ccc" />
        <path d="M1249.500 21.500L1252.800 18 1248.500 13.500 1242 21 1247.500 27 1253.500 21M1245.500 21L1249.500 17" fill="none" stroke="#fff" strokeWidth="1.800" />
        <path d="M1276.500 10H1283.500L1288.500 16V25L1283.500 31H1276.500L1271.500 25V16Z" fill="#484848" />
        <path d="M1275.800 21V15.500a.8.8 0 0 1 1.600 0V19h.5V13.500a.8.8 0 0 1 1.600 0V19h.4V12.800a.8.8 0 0 1 1.600 0V19h.4V14.500a.8.8 0 0 1 1.600 0V22l1.200-2.500a.9.9 0 0 1 1.500.8L1283.800 27Q1282.500 29.300 1280 29.300 1276 29 1275.800 25Z" fill="#eee" />
        <rect x="1302" y="9" width="19" height="23" fill="#bebebe" />
        <text x="1303.500" y="29" fontSize="36" fill="#fff" textLength="16" lengthAdjust="spacingAndGlyphs" className="font-['Liberation_Serif',serif]">n</text>
        <path d="M1338 14.500H1349M1338 20.500H1349M1338 26.500H1349" stroke="#d9261f" strokeWidth="3.200" strokeLinecap="round" />
      </svg>
    </header>
  );
}

function Contact({ label, value, labelWidth, valueWidth }) {
  return (
    <li className="flex gap-[10px]">
      <Fit className={`${labelWidth} text-[#f5a623]`}>{label}</Fit>
      <Fit className={`${valueWidth} font-bold text-white`}>{value}</Fit>
    </li>
  );
}

export default function App() {
  return (
    <div className="flex h-[769px] w-[1360px] flex-col overflow-hidden bg-white font-[Roboto,sans-serif]">
      <Toolbar />
      <div className="flex min-h-0 flex-1">
        <main className="flex w-[1343px] flex-col">
          <section className="h-20 overflow-hidden bg-[#f3f3f3] pl-[67px] text-[17.5px] text-[#2199c8]">
            <Fit className="-mt-[9px] h-5 w-[125px] leading-5">Javascript Basics</Fit>
            <div className="flex h-[26px] pt-px">
              <Fit className="w-[149px] text-[16.5px] leading-[18px] text-[#999] italic">2nd Oct to 10th October</Fit>
              <Fit className="w-[60px] pt-px leading-[20px] text-black">- Udacity</Fit>
            </div>
            <Fit className="mt-[10px] w-[169px] leading-5">http://www.udacity.com</Fit>
          </section>
          <section className="h-[546px] pl-[67px]">
            <h2 className="flex h-[57px] pt-[12px] text-[27.5px] leading-[34px] font-bold text-[#999]"><Fit className="w-[307px]">Where I've Lived and Worked</Fit></h2>
            <div className="h-[468px] w-[1209px]"><WorldMap /></div>
          </section>
          <h2 className="flex h-[57px] justify-center bg-[#f5ae23] pt-[12px] text-[27.5px] leading-[34px] font-bold text-[#999]"><Fit className="w-[144px]">Let's Connect</Fit></h2>
          <ul className="flex h-11 justify-between bg-[#4a4a4a] pt-3 pr-[91px] pl-[91px] text-[17.5px] leading-6">
            <Contact label="mobile" value="845-616-xxxx" labelWidth="w-[48px]" valueWidth="w-[100px]" />
            <Contact label="email" value="aims4success@gmail.com" labelWidth="w-[39px]" valueWidth="w-[192px]" />
            <Contact label="location" value="New York" labelWidth="w-[57px]" valueWidth="w-[68px]" />
            <Contact label="twitter" value="Aiman Aijaz" labelWidth="w-[45px]" valueWidth="w-[86px]" />
          </ul>
        </main>
        <aside className="flex w-[17px] flex-col items-center bg-[#f1f1f1]">
          <div className="mt-2 h-0 w-0 border-x-4 border-b-[5px] border-x-transparent border-b-[#505050]" />
          <div className="mt-[531px] h-[165px] w-[13px] bg-[#a8a8a8]" />
          <div className="mt-[7px] h-0 w-0 border-x-4 border-t-[5px] border-x-transparent border-t-[#999]" />
        </aside>
      </div>
    </div>
  );
}
